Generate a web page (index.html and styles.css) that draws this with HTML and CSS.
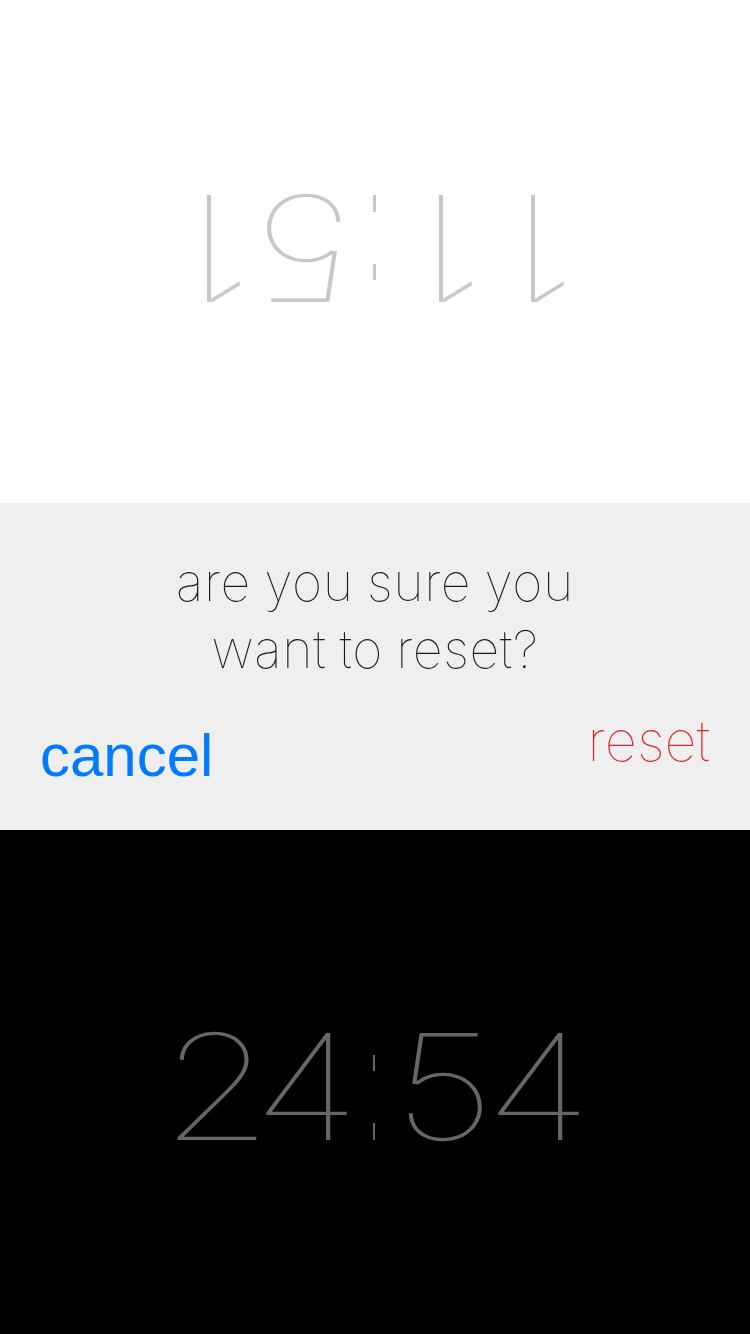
FILE: index.html
```html
<!DOCTYPE html>
<html>
<head>
<meta charset="utf-8">
<link rel="stylesheet" href="styles.css">
</head>
<body>
<div class="screen">
  <section class="half half-top">
    <div class="clock clock-flipped"><span class="digit digit-one">1</span><span class="digit digit-one">1</span><span class="colon">:</span><span class="digit">5</span><span class="digit digit-one">1</span></div>
  </section>
  <section class="dialog">
    <p class="question">are you sure you<br>want to reset?</p>
    <div class="actions">
      <span class="btn btn-cancel">cancel</span>
      <span class="btn btn-reset">reset</span>
    </div>
  </section>
  <section class="half half-bottom">
    <div class="clock clock-main"><span class="digit">2</span><span class="digit">4</span><span class="colon">:</span><span class="digit">5</span><span class="digit">4</span></div>
  </section>
</div>
</body>
</html>
```
FILE: styles.css
```css
html, body {
  margin: 0;
  padding: 0;
}
body {
  width: 750px;
  height: 1334px;
  overflow: hidden;
  font-family: "Inter", "Roboto", "Liberation Sans", sans-serif;
}
.screen {
  display: flex;
  flex-direction: column;
  height: 1334px;
}
.half {
  display: flex;
  align-items: center;
  justify-content: center;
}
.half-top {
  height: 503px;
  background: #ffffff;
}
.half-bottom {
  height: 504px;
  background: #000000;
}
.clock {
  font-size: 147px;
  font-weight: 100;
  line-height: 1;
  white-space: nowrap;
}
.digit {
  display: inline-block;
  width: 72px;
  margin: 0 10px;
  text-align: center;
  letter-spacing: -12px;
  transform: translateX(-7px) scaleX(1.22);
}
.digit-one {
  transform: translateX(-14px) scaleX(1.22);
}
.colon {
  display: inline-block;
  position: relative;
  width: 48px;
  height: 116px;
  overflow: hidden;
  vertical-align: baseline;
  font-size: 10px;
  color: transparent;
}
.colon::before,
.colon::after {
  content: "";
  position: absolute;
  left: 23px;
  width: 2.5px;
}
.clock-main .colon::before,
.clock-main .colon::after {
  background: #666666;
}
.clock-flipped .colon::before,
.clock-flipped .colon::after {
  background: #c8c8c8;
}
.colon::before {
  top: 31px;
  height: 16px;
}
.colon::after {
  bottom: 0;
  height: 17px;
}
.clock-flipped {
  color: #c8c8c8;
  transform: rotate(180deg);
  margin-bottom: 6px;
}
.clock-main {
  color: #666666;
  margin-left: -3px;
  margin-top: 8px;
}
.dialog {
  height: 327px;
  background: #efefef;
  display: flex;
  flex-direction: column;
}
.question {
  margin: 46px 0 0;
  text-align: center;
  font-size: 52px;
  font-weight: 100;
  line-height: 67px;
  letter-spacing: 0.6px;
  word-spacing: -2px;
  color: #1a1a1a;
}
.actions {
  display: flex;
  justify-content: space-between;
  align-items: flex-start;
  padding: 0 40px;
  margin-top: 30px;
}
.btn {
  line-height: 1;
}
.btn-cancel {
  font-family: "Liberation Sans", "Helvetica Neue", Arial, sans-serif;
  font-size: 60px;
  color: #007aff;
  margin-top: 13px;
}
.btn-reset {
  font-size: 56px;
  font-weight: 100;
  color: #e3242b;
}
```
